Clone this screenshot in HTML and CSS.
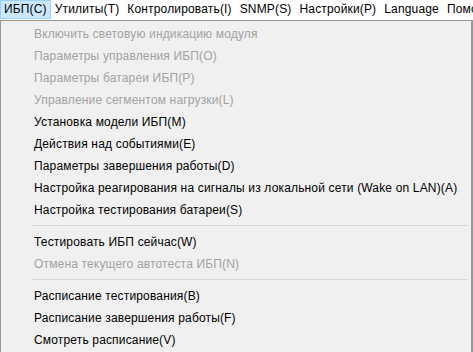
FILE: index.html
```html
<!DOCTYPE html>
<html lang="ru">
<head>
    <meta charset="UTF-8">
    <title>ИБП</title>
    <link rel="stylesheet" href="styles.css">
</head>
<body>
    <div class="menubar">
        <div class="menubar-item open">ИБП(С)</div>
        <div class="menubar-item">Утилиты(T)</div>
        <div class="menubar-item">Контролировать(I)</div>
        <div class="menubar-item">SNMP(S)</div>
        <div class="menubar-item">Настройки(P)</div>
        <div class="menubar-item">Language</div>
        <div class="menubar-item">Помощь(H)</div>
    </div>

    <div class="dropdown">
        <div class="menu-item disabled">Включить световую индикацию модуля</div>
        <div class="menu-item disabled">Параметры управления ИБП(O)</div>
        <div class="menu-item disabled">Параметры батареи ИБП(P)</div>
        <div class="menu-item disabled">Управление сегментом нагрузки(L)</div>
        <div class="menu-item">Установка модели ИБП(M)</div>
        <div class="menu-item">Действия над событиями(E)</div>
        <div class="menu-item">Параметры завершения работы(D)</div>
        <div class="menu-item">Настройка реагирования на сигналы из локальной сети (Wake on LAN)(A)</div>
        <div class="menu-item">Настройка тестирования батареи(S)</div>
        <div class="separator"></div>
        <div class="menu-item">Тестировать ИБП сейчас(W)</div>
        <div class="menu-item disabled">Отмена текущего автотеста ИБП(N)</div>
        <div class="separator"></div>
        <div class="menu-item">Расписание тестирования(B)</div>
        <div class="menu-item">Расписание завершения работы(F)</div>
        <div class="menu-item">Смотреть расписание(V)</div>
    </div>
</body>
</html>
```

FILE: styles.css
```css
* {
    margin: 0;
    padding: 0;
    box-sizing: border-box;
}

body {
    font-family: "Liberation Sans", Arial, sans-serif;
    font-size: 12px;
    letter-spacing: 0.16px;
    color: #000;
    background: #fff;
    width: 473px;
    height: 352px;
    overflow: hidden;
}

.menubar {
    display: flex;
    height: 20px;
    background: #fff;
    white-space: nowrap;
    overflow: hidden;
}

.menubar-item {
    padding: 0 3px;
    height: 19px;
    line-height: 17px;
    border: 1px solid transparent;
}

.menubar-item.open {
    background: #cce8ff;
    border-color: #99d1ff;
}

.dropdown {
    width: 473px;
    height: 340px;
    background: #f0f0f0;
    border: 1px solid #979797;
    border-right-width: 2px;
    border-bottom: none;
    padding-top: 2px;
}

.menu-item {
    height: 22px;
    line-height: 22px;
    padding-left: 33px;
    white-space: nowrap;
}

.menu-item.disabled {
    color: #a3a3a3;
}

.separator {
    height: 10px;
    padding-top: 4px;
    margin: 0 3px 0 31px;
}

.separator::after {
    content: '';
    display: block;
    height: 1px;
    background: #d7d7d7;
}
```
